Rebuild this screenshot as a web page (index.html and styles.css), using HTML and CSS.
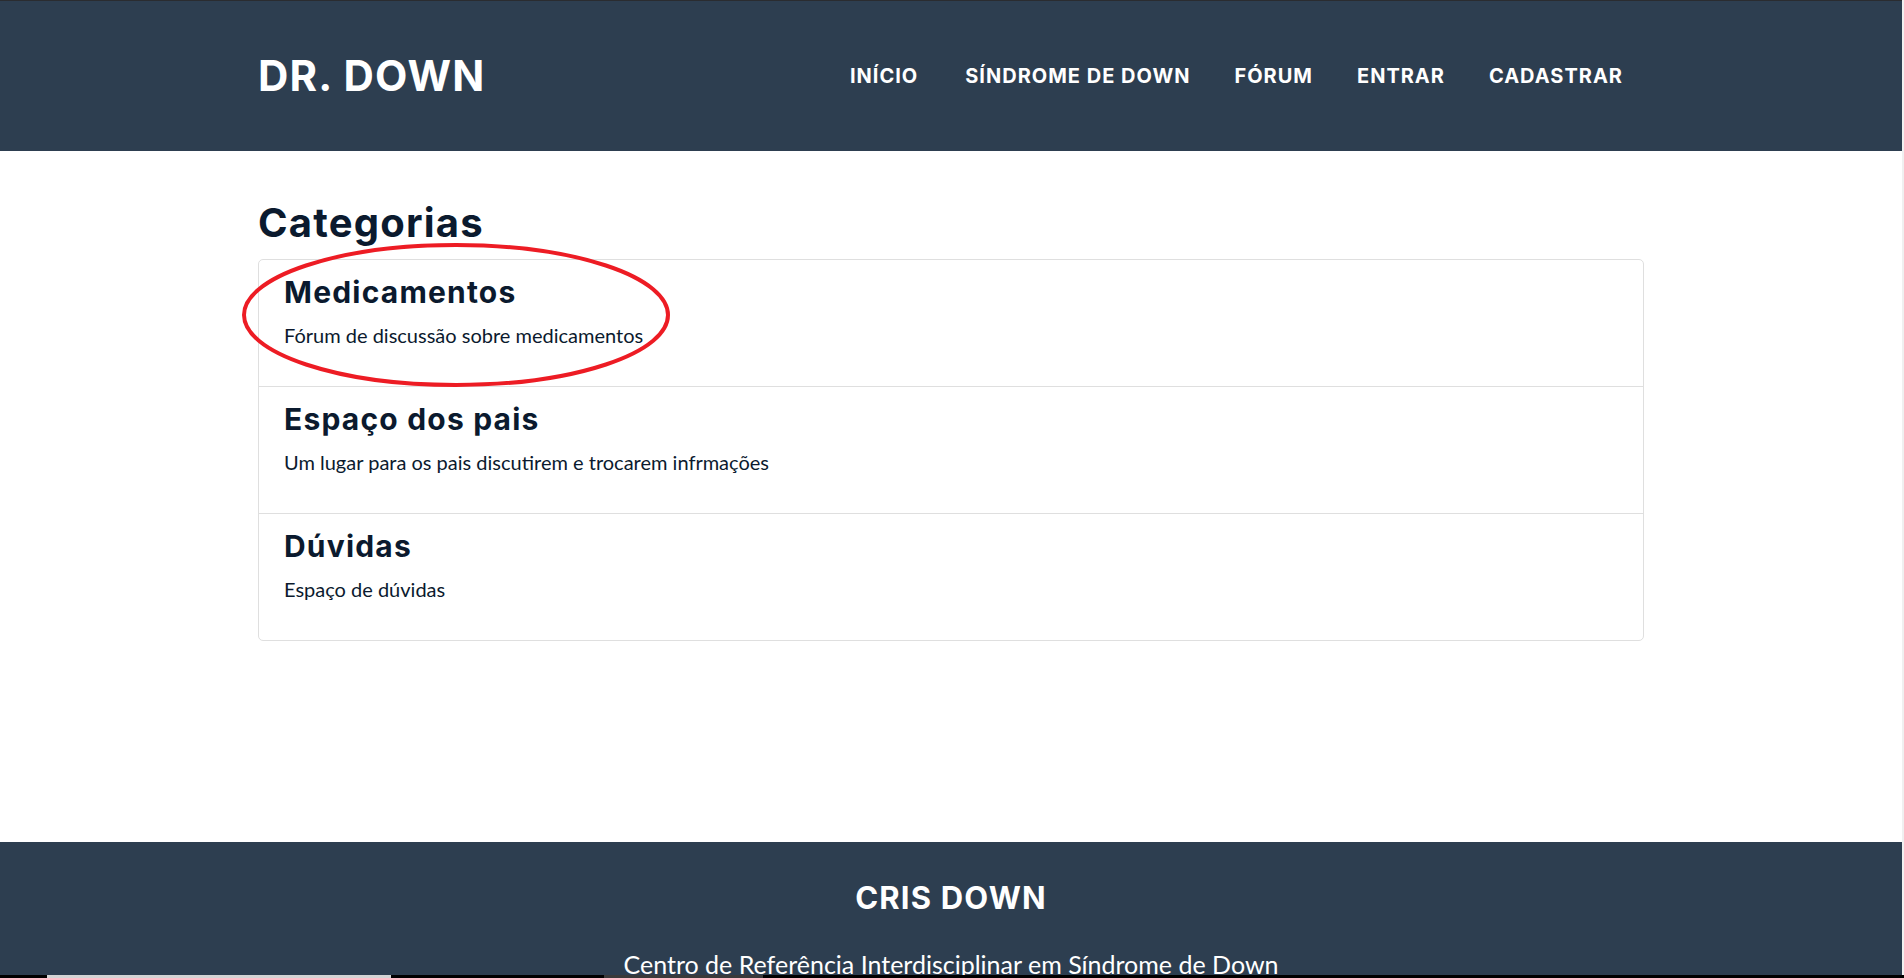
FILE: index.html
```html
<!DOCTYPE html>
<html lang="pt-BR">
<head>
<meta charset="utf-8">
<title>Dr. Down - Fórum</title>
<link rel="stylesheet" href="styles.css">
</head>
<body>
<div class="page">
  <header class="site-header">
    <div class="container header-inner">
      <a class="logo" href="#">DR. DOWN</a>
      <nav class="nav">
        <a href="#">INÍCIO</a>
        <a href="#">SÍNDROME DE DOWN</a>
        <a href="#">FÓRUM</a>
        <a href="#">ENTRAR</a>
        <a href="#">CADASTRAR</a>
      </nav>
    </div>
  </header>

  <main class="main">
    <div class="container">
      <h1 class="page-title">Categorias</h1>
      <div class="card">
        <div class="cat-row">
          <h3 class="cat-title">Medicamentos</h3>
          <p class="cat-desc">Fórum de discussão sobre medicamentos</p>
        </div>
        <div class="cat-row">
          <h3 class="cat-title">Espaço dos pais</h3>
          <p class="cat-desc">Um lugar para os pais discutirem e trocarem infrmações</p>
        </div>
        <div class="cat-row">
          <h3 class="cat-title">Dúvidas</h3>
          <p class="cat-desc">Espaço de dúvidas</p>
        </div>
      </div>
    </div>
  </main>

  <footer class="site-footer">
    <h2 class="footer-title">CRIS DOWN</h2>
    <p class="footer-sub">Centro de Referência Interdisciplinar em Síndrome de Down</p>
  </footer>
</div>

<svg class="annotation" width="460" height="170" viewBox="0 0 460 170" aria-hidden="true">
  <ellipse cx="230" cy="85" rx="212" ry="70" fill="none" stroke="#ed1c24" stroke-width="4"/>
</svg>

<div class="taskbar">
  <span class="tb-light"></span>
  <span class="tb-dark"></span>
</div>
</body>
</html>
```

FILE: styles.css
```css
html {
  background: #f0f0f0;
}

body {
  margin: 0;
  font-family: "Lato", "Open Sans", sans-serif;
  color: #0b1a2e;
  overflow: hidden;
}

.page {
  width: calc(100% - 2px);
  background: #ffffff;
  min-height: 100vh;
}

.container {
  width: 1386px;
  margin: 0 auto;
}

.site-header {
  background: #2d3e50;
  height: 150px;
  border-top: 1px solid #2a2c30;
}

.header-inner {
  display: flex;
  align-items: center;
  justify-content: space-between;
  height: 100%;
}

.logo {
  font-family: "Inter", "Open Sans", sans-serif;
  font-weight: 700;
  font-size: 42px;
  letter-spacing: 1.2px;
  color: #ffffff;
  text-decoration: none;
  margin-top: -2px;
}

.nav {
  display: flex;
  align-items: center;
}

.nav a {
  font-family: "Inter", "Open Sans", sans-serif;
  font-weight: 700;
  font-size: 20px;
  letter-spacing: 1px;
  color: #ffffff;
  text-decoration: none;
  padding: 0 22px;
}

.nav a:first-child {
  padding-left: 0;
  margin-right: 3px;
}

.nav a:last-child {
  padding-right: 21px;
}

.main {
  padding: 48px 0 201px;
}

.page-title {
  font-family: "Inter", "Open Sans", sans-serif;
  font-weight: 700;
  font-size: 40px;
  line-height: 1.2;
  letter-spacing: 1.2px;
  color: #0b1a2e;
  margin: 0 0 12px;
}

.card {
  border: 1px solid #dfdfdf;
  border-radius: 5px;
}

.cat-row {
  padding: 14px 25px 36px;
  border-bottom: 1px solid #dfdfdf;
}

.cat-row:last-child {
  border-bottom: none;
}

.cat-title {
  font-family: "Inter", "Open Sans", sans-serif;
  font-weight: 700;
  font-size: 30px;
  line-height: 1.2;
  letter-spacing: 1.2px;
  color: #0b1a2e;
  margin: 0 0 10px;
}

.cat-desc {
  font-size: 20px;
  line-height: 1.5;
  margin: 0;
  color: #0b1a2e;
}

.site-footer {
  background: #2d3e50;
  color: #ffffff;
  text-align: center;
  padding: 37px 0 40px;
}

.footer-title {
  font-family: "Inter", "Open Sans", sans-serif;
  font-weight: 700;
  font-size: 31px;
  line-height: 1.2;
  letter-spacing: 1.2px;
  margin: 0 0 30px;
}

.footer-sub {
  font-size: 25px;
  line-height: 1.5;
  margin: 0;
}

.annotation {
  position: absolute;
  left: 226px;
  top: 230px;
}

.taskbar {
  position: fixed;
  left: 0;
  right: 0;
  bottom: 0;
  height: 3px;
  background: #000000;
}

.tb-light {
  position: absolute;
  left: 47px;
  width: 344px;
  top: 0;
  bottom: 0;
  background: #d4d4d4;
}

.tb-dark {
  position: absolute;
  left: 604px;
  width: 159px;
  top: 0;
  bottom: 0;
  background: #3a3a3a;
}
```
